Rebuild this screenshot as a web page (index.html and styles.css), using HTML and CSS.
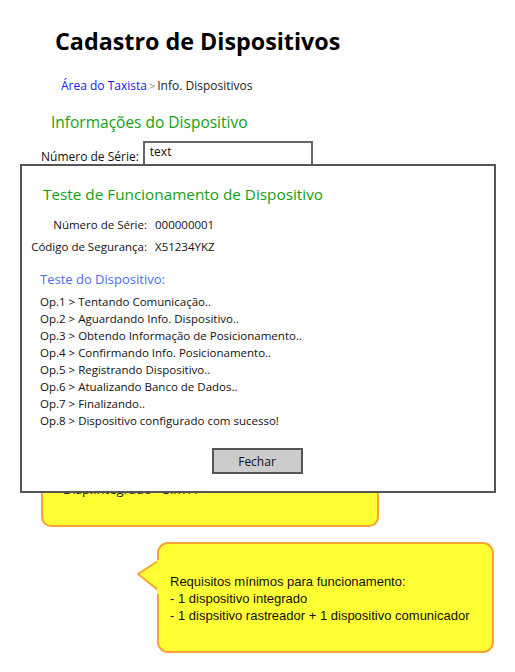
FILE: index.html
```html
<!DOCTYPE html>
<html lang="pt">
<head>
<meta charset="utf-8">
<title>Cadastro de Dispositivos</title>
<link rel="stylesheet" href="styles.css">
</head>
<body>
<div class="page">
  <h1 class="title">Cadastro de Dispositivos</h1>
  <div class="crumbs"><span class="crumb-link">Área do Taxista</span><span class="crumb-sep">&gt;</span><span class="crumb-cur">Info. Dispositivos</span></div>
  <h2 class="section">Informações do Dispositivo</h2>
  <div class="form-row">
    <span class="form-label">Número de Série:</span>
    <div class="input">text</div>
  </div>
  <div class="note-box">
    <div class="note-line">Disp.integrado - Sim A</div>
  </div>
  <div class="callout">
    <svg class="callout-tip" width="24" height="34" viewBox="0 0 24 34"><polygon points="22,1 2,14 22,30" fill="#ffff33" stroke="#f8a433" stroke-width="2" stroke-linejoin="round"/><rect x="21" y="0" width="4" height="34" fill="#ffff33"/></svg>
    <p class="callout-text">Requisitos mínimos para funcionamento:<br>- 1 dispositivo integrado<br>- 1 dispsitivo rastreador + 1 dispositivo comunicador</p>
  </div>

  <div class="modal">
    <h2 class="modal-title">Teste de Funcionamento de Dispositivo</h2>
    <div class="info-grid">
      <span class="info-label">Número de Série:</span><span class="info-value">000000001</span>
      <span class="info-label">Código de Segurança:</span><span class="info-value">X51234YKZ</span>
    </div>
    <div class="test-title">Teste do Dispositivo:</div>
    <ul class="ops">
      <li>Op.1 &gt; Tentando Comunicação..</li>
      <li>Op.2 &gt; Aguardando Info. Dispositivo..</li>
      <li>Op.3 &gt; Obtendo Informação de Posicionamento..</li>
      <li>Op.4 &gt; Confirmando Info. Posicionamento..</li>
      <li>Op.5 &gt; Registrando Dispositivo..</li>
      <li>Op.6 &gt; Atualizando Banco de Dados..</li>
      <li>Op.7 &gt; Finalizando..</li>
      <li>Op.8 &gt; Dispositivo configurado com sucesso!</li>
    </ul>
    <div class="actions"><button class="btn">Fechar</button></div>
  </div>
</div>
</body>
</html>
```
FILE: styles.css
```css
html, body {
  margin: 0;
  padding: 0;
  background: #fff;
}
.page {
  position: relative;
  width: 515px;
  height: 672px;
  font-family: "Open Sans", "DejaVu Sans", sans-serif;
  color: #111;
  overflow: hidden;
}
.title {
  margin: 0;
  padding: 26px 0 0 55px;
  font-size: 23.3px;
  line-height: 30px;
  font-weight: 700;
  color: #000;
}
.crumbs {
  margin: 21px 0 0 61px;
  font-size: 12px;
  line-height: 18px;
}
.crumb-link { color: #1515f0; }
.crumb-sep { color: #888; margin: 0 2px; font-size: 11px; }
.crumb-cur { color: #222; }
.section {
  margin: 17px 0 0 51px;
  font-size: 15.5px;
  line-height: 20px;
  font-weight: 400;
  color: #14a014;
}
.form-row {
  display: flex;
  align-items: flex-end;
  margin: 9px 0 0 41px;
}
.form-label {
  font-size: 12px;
  line-height: 16px;
  margin-right: 4px;
}
.input {
  width: 170px;
  height: 24px;
  border: 2px solid #666;
  border-bottom: none;
  font-size: 12px;
  line-height: 16px;
  padding: 1px 0 0 5px;
  box-sizing: border-box;
}
.note-box {
  margin: 305px 0 0 41px;
  width: 338px;
  height: 57px;
  box-sizing: border-box;
  background: #ffff33;
  border: 2px solid #f8a433;
  border-top: none;
  border-radius: 0 0 10px 10px;
  padding: 11px 0 0 20px;
}
.note-line {
  font-size: 13px;
  line-height: 16px;
  color: #222;
}
.callout {
  position: relative;
  margin: 15px 0 0 157px;
  width: 337px;
  height: 111px;
  box-sizing: border-box;
  background: #ffff33;
  border: 2px solid #f8a433;
  border-radius: 11px;
  padding: 29px 0 0 11px;
}
.callout-tip {
  position: absolute;
  left: -23px;
  top: 16px;
}
.callout-text {
  margin: 0;
  font-family: "Liberation Sans", Arial, sans-serif;
  font-size: 13px;
  line-height: 17px;
  color: #111;
}
.modal {
  position: absolute;
  left: 20px;
  top: 164px;
  width: 476px;
  height: 329px;
  box-sizing: border-box;
  background: #fff;
  border: 2px solid #555;
  padding: 18px 0 0 21px;
}
.modal-title {
  margin: 0;
  font-size: 15.3px;
  line-height: 20px;
  font-weight: 400;
  color: #14a014;
}
.info-grid {
  display: grid;
  grid-template-columns: 116px auto;
  column-gap: 8px;
  row-gap: 6px;
  margin: 13px 0 0 -12px;
  font-size: 11.5px;
  line-height: 16px;
  white-space: nowrap;
}
.info-label { text-align: right; }
.test-title {
  margin: 16px 0 0 -3px;
  font-size: 13px;
  line-height: 17px;
  color: #4b6ef2;
}
.ops {
  list-style: none;
  margin: 5px 0 0 -3px;
  padding: 0;
  font-size: 11.5px;
  line-height: 17px;
}
.actions {
  display: flex;
  justify-content: center;
  margin: 19px 0 0 -23px;
}
.btn {
  width: 91px;
  height: 26px;
  background: #cccccc;
  border: 2px solid #555;
  font-family: "Open Sans", "DejaVu Sans", sans-serif;
  font-size: 12px;
  color: #111;
  padding: 0;
}
```
